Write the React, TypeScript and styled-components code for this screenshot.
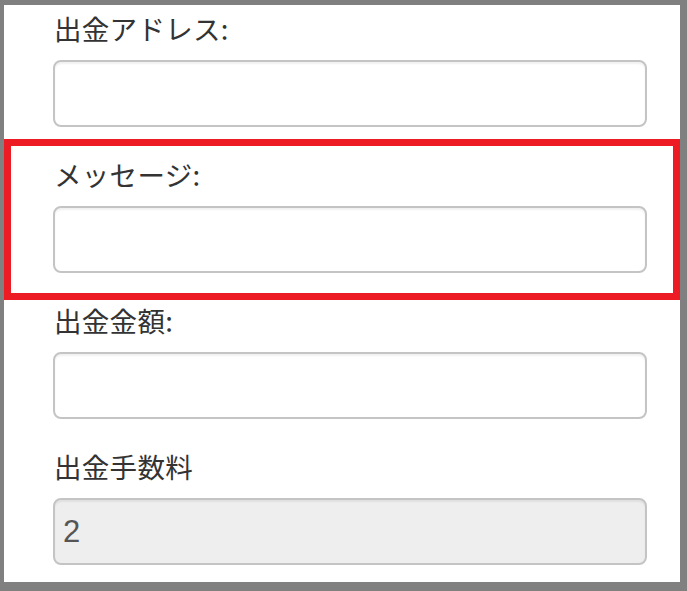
import React from 'react';
import styled, { createGlobalStyle } from 'styled-components';

const GlobalStyle = createGlobalStyle`
  html, body {
    margin: 0;
    padding: 0;
    background: #808080;
  }
  body {
    font-family: "Noto Sans CJK JP", "Noto Sans", sans-serif;
  }
`;

const Frame = styled.div`
  width: 687px;
  height: 591px;
  padding: 5px 7px 9px 4px;
  box-sizing: border-box;
  background: #808080;
`;

const Panel = styled.div`
  height: 577px;
  background: #ffffff;
  overflow: hidden;
  display: flex;
  flex-direction: column;
`;

const Group = styled.div`
  position: relative;
  height: 146px;
  flex-shrink: 0;
  box-sizing: border-box;
  padding: 0 33px 0 49px;
  display: flex;
  flex-direction: column;
`;

const Highlight = styled.div`
  position: absolute;
  top: -12px;
  bottom: -3px;
  left: 0;
  right: 0;
  border: 7px solid #ed1c24;
  pointer-events: none;
`;

const Label = styled.label`
  display: block;
  height: 55px;
  line-height: 46px;
  font-size: 27.5px;
  letter-spacing: 0.3px;
  color: #333333;
  padding-left: 1px;
`;

const Field = styled.input`
  display: block;
  width: 100%;
  height: 67px;
  box-sizing: border-box;
  border: 2px solid #c4c4c4;
  border-radius: 8px;
  background: #ffffff;
  box-shadow: inset 0 2px 2px rgba(0, 0, 0, 0.06);
  padding: 0 8px;
  font-family: "Liberation Sans", Arial, sans-serif;
  font-size: 31px;
  color: #555555;
  outline: none;

  &:disabled {
    background: #eeeeee;
    color: #555555;
    -webkit-text-fill-color: #555555;
    opacity: 1;
  }
`;

type FieldDef = {
  label: string;
  value?: string;
  disabled?: boolean;
  highlight?: boolean;
};

const fields: FieldDef[] = [
  { label: '出金アドレス:' },
  { label: 'メッセージ:', highlight: true },
  { label: '出金金額:' },
  { label: '出金手数料', value: '2', disabled: true },
];

export default function App() {
  return (
    <>
      <GlobalStyle />
      <Frame>
        <Panel>
          {fields.map((f) => (
            <Group key={f.label}>
              <Label>{f.label}</Label>
              <Field
                type="text"
                defaultValue={f.value ?? ''}
                disabled={f.disabled}
              />
              {f.highlight && <Highlight />}
            </Group>
          ))}
        </Panel>
      </Frame>
    </>
  );
}
